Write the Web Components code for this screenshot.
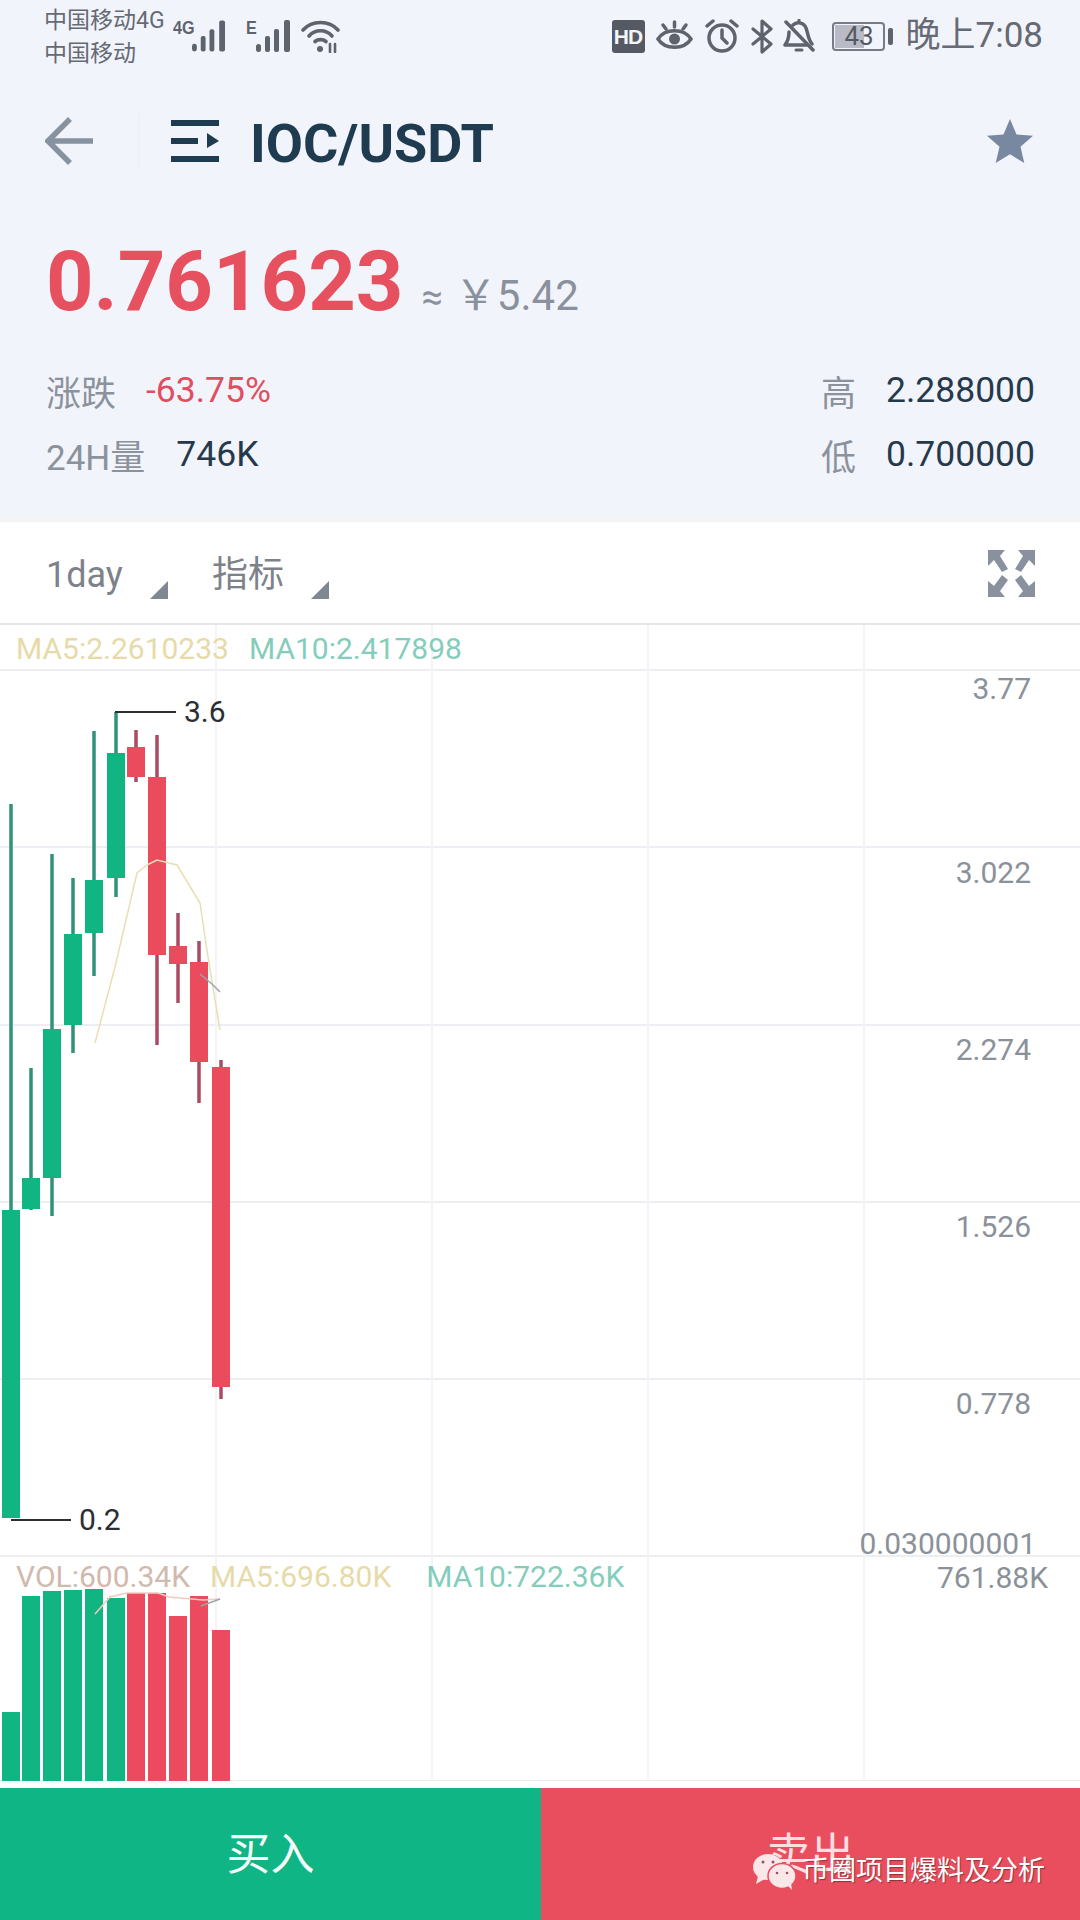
<!DOCTYPE html>
<html lang="zh">
<head>
<meta charset="utf-8">
<title>IOC/USDT</title>
<style>
html, body { margin: 0; padding: 0; background: #fff; }
body { width: 1080px; height: 1920px; overflow: hidden; font-family: Roboto, "Noto Sans CJK SC", sans-serif; }
#app { display: flex; flex-direction: column; width: 1080px; height: 1920px; position: relative; }
</style>
</head>
<body>
<div id="app">
    <status-bar></status-bar>
    <pair-header pair="IOC/USDT"></pair-header>
    <price-panel></price-panel>
    <chart-toolbar></chart-toolbar>
    <kline-chart></kline-chart>
    <trade-buttons></trade-buttons>
</div>

<script>
const FONT = 'Roboto, "Noto Sans CJK SC", sans-serif';

class StatusBar extends HTMLElement {
    constructor() {
        super();
        this.attachShadow({mode: "open"});
    }

    connectedCallback() {
        this.shadowRoot.innerHTML = `${this.styles()}${this.render()}`;
    }

    bars() {
        return `<svg width="35" height="34" viewBox="0 0 35 34">
            <g fill="#5f636e">
                <rect x="0" y="25" width="5" height="8" rx="2.5"/>
                <rect x="9" y="17" width="5" height="16" rx="2"/>
                <rect x="18" y="10" width="5" height="23" rx="2"/>
                <rect x="28" y="1" width="6" height="32" rx="2"/>
            </g></svg>`;
    }

    render() {
        return `
        <div class="carrier"><span>中国移动4G</span><span>中国移动</span></div>
        <div class="sig first"><b>4G</b>${this.bars()}</div>
        <div class="sig second"><b>E</b>${this.bars()}</div>
        <svg class="wifi" width="39" height="34" viewBox="0 0 39 34" fill="none" stroke="#5f636e" stroke-width="3.6" stroke-linecap="round">
            <path d="M2 11C11 1 28 1 37 11"/>
            <path d="M8 17C14 10 25 10 31 17"/>
            <path d="M14 22.500C17 20 22 20 25 22.500"/>
            <circle cx="19" cy="30" r="3" fill="#5f636e" stroke="none"/>
            <path d="M29 25V33M34 33V25" stroke-width="2.600"/>
        </svg>
        <div class="right">
            <div class="hd">HD</div>
            <svg class="eye" width="37" height="32" viewBox="0 0 37 32" fill="none" stroke="#5f636e" stroke-width="3.500" stroke-linecap="round">
                <path d="M2 19C9 8 28 8 35 19C28 30 9 30 2 19Z"/>
                <circle cx="18.500" cy="19" r="5.500" fill="#5f636e" stroke="none"/>
                <path d="M18.500 2V7M7 5L10 9M30 5L27 9"/>
            </svg>
            <svg width="34" height="34" viewBox="0 0 34 34" fill="none" stroke="#5f636e" stroke-width="3.500" stroke-linecap="round">
                <circle cx="17" cy="19" r="13"/>
                <path d="M17 11V19L22 24M2 7L8 2M32 7L26 2"/>
            </svg>
            <svg width="23" height="35" viewBox="0 0 23 35" fill="none" stroke="#5f636e" stroke-width="3.200" stroke-linecap="round" stroke-linejoin="round">
                <path d="M2 10L20 25L11 33V2L20 10L2 25"/>
            </svg>
            <svg class="bell" width="32" height="34" viewBox="0 0 32 34" fill="none" stroke="#5f636e" stroke-width="3.500" stroke-linecap="round" stroke-linejoin="round">
                <path d="M10 6C13 3 19 3 22 7C25 11 24 19 29 25M6 13C6 19 5 22 2 26H24"/>
                <path d="M3 3L30 31"/>
                <path d="M13 31H19" stroke-width="3"/>
                <path d="M16 1V3" stroke-width="3"/>
            </svg>
            <div class="battery"><i></i><span>43</span></div>
            <div class="tip"></div>
            <div class="time">晚上7:08</div>
        </div>
        `;
    }

    styles() {
        return `<style>
        :host { display: flex; align-items: flex-start; height: 72px; box-sizing: border-box; padding: 8px 37px 0 44px; background: #f2f4fb; color: #666a74; font-family: ${FONT}; }
        .carrier { display: flex; flex-direction: column; width: 129px; font-size: 23px; line-height: 33px; white-space: nowrap; margin-top: -4px; }
        .sig { display: flex; align-items: flex-start; margin-top: 11px; height: 34px; }
        .sig b { font: 700 19px/18px "Liberation Sans", sans-serif; color: #5f636e; transform: scaleX(.85); transform-origin: left; }
        .first { width: 53px; }
        .first b { width: 19px; }
        .second { margin-left: 20px; }
        .second b { width: 10px; }
        .wifi { margin: 11px 0 0 10px; }
        .right { display: flex; align-items: center; gap: 12px; margin-left: auto; margin-top: 11px; height: 34px; }
        .eye { margin-left: -1px; }
        .bell { margin-left: -3px; }
        .hd { width: 33px; height: 33px; border-radius: 3px; background: #555964; color: #f3f4f8; font: 700 21px/33px "Liberation Sans", sans-serif; text-align: center; letter-spacing: -1px; }
        .battery { position: relative; width: 53px; height: 29px; box-sizing: border-box; border: 2px solid #777b85; border-radius: 4px; margin-left: 5px; font-size: 26px; line-height: 25px; text-align: center; color: #565a65; }
        .battery i { position: absolute; left: 1px; top: 1px; bottom: 1px; width: 29px; background: #b8bbc6; }
        .battery span { position: relative; left: 1px; }
        .tip { width: 5px; height: 17px; border-radius: 2px; background: #5f636e; margin-left: -9px; }
        .time { font-size: 35px; line-height: 34px; margin-left: 1px; white-space: nowrap; }
        </style>`;
    }
}

class PairHeader extends HTMLElement {
    constructor() {
        super();
        this.attachShadow({mode: "open"});
    }

    connectedCallback() {
        this.shadowRoot.innerHTML = `${this.styles()}${this.render()}`;
    }

    render() {
        return `
        <svg class="back" width="48" height="48" viewBox="0 0 48 48" fill="none" stroke="#8792a0" stroke-width="5.500">
            <path d="M48 24H4M25 2L3 24L25 46"/>
        </svg>
        <div class="split"></div>
        <svg class="menu" width="48" height="42" viewBox="0 0 48 42" fill="#1f3b50">
            <rect x="0" y="0" width="48" height="6"/>
            <rect x="0" y="18" width="27" height="6"/>
            <rect x="0" y="36" width="48" height="6"/>
            <path d="M36 13L48 21L36 28Z"/>
        </svg>
        <div class="pair">${this.getAttribute('pair')}</div>
        <svg class="star" width="46" height="44" viewBox="0 0 46 44" fill="#7888a0">
            <path d="M23 0L29.500 15.500L46 16.800L33.500 27.800L37.300 44L23 35.300L8.700 44L12.500 27.800L0 16.800L16.500 15.500Z"/>
        </svg>
        `;
    }

    styles() {
        return `<style>
        :host { display: flex; align-items: center; height: 138px; box-sizing: border-box; padding: 0 47px 0 45px; background: #f2f4fb; font-family: ${FONT}; }
        .split { width: 2px; height: 54px; margin-left: 45px; background: #eff1f8; }
        .menu { margin-left: 31px; }
        .pair { margin: 4px 0 0 31px; font-size: 54px; font-weight: 700; color: #1f3b50; white-space: nowrap; }
        .star { margin-left: auto; }
        </style>`;
    }
}

class PricePanel extends HTMLElement {
    constructor() {
        super();
        this.attachShadow({mode: "open"});
    }

    connectedCallback() {
        this.shadowRoot.innerHTML = `${this.styles()}${this.render()}`;
    }

    render() {
        return `
        <div class="price"><b>0.761623</b><span class="approx">≈</span><span class="cny">￥5.42</span></div>
        <div class="stats">
            <div class="cell"><span class="k">涨跌</span><span class="v red">-63.75%</span></div>
            <div class="cell right"><span class="k">高</span><span class="v">2.288000</span></div>
            <div class="cell"><span class="k">24H量</span><span class="v">746K</span></div>
            <div class="cell right"><span class="k">低</span><span class="v">0.700000</span></div>
        </div>
        `;
    }

    styles() {
        return `<style>
        :host { display: flex; flex-direction: column; height: 312px; box-sizing: border-box; padding: 30px 45px 0 46px; background: #f2f4fb; border-bottom: 8px solid #f4f4f7; font-family: ${FONT}; }
        .price { display: flex; align-items: baseline; height: 84px; line-height: 84px; white-space: nowrap; }
        .price b { font-size: 83px; font-weight: 700; color: #e7505f; }
        .approx { margin-left: 18px; font-size: 38px; color: #8a919c; }
        .cny { margin-left: 12px; font-size: 42px; color: #8a919c; }
        .stats { display: grid; grid-template-columns: 1fr auto; grid-auto-rows: 64px; margin-top: 34px; }
        .cell { display: flex; align-items: center; white-space: nowrap; }
        .right { gap: 30px; }
        .k { font-size: 35px; color: #8b929c; }
        .v { margin-left: 31px; font-size: 35.500px; color: #26394b; }
        .right .v { margin-left: 0; }
        .red { margin-left: 30px; font-size: 35.500px; color: #df4f60; }
        </style>`;
    }
}

class ChartToolbar extends HTMLElement {
    constructor() {
        super();
        this.attachShadow({mode: "open"});
    }

    connectedCallback() {
        this.shadowRoot.innerHTML = `${this.styles()}${this.render()}`;
    }

    render() {
        return `
        <div class="drop"><span>1day</span><i></i></div>
        <div class="drop second"><span>指标</span><i></i></div>
        <svg class="full" width="47" height="47" viewBox="0 0 47 47" fill="#8a919e">
            <path d="M0 0H17L12 6L20 19L14 22L6 10L0 16Z"/>
            <path d="M47 0H30L35 6L27 19L33 22L41 10L47 16Z"/>
            <path d="M0 47H17L12 41L20 30L14 25L6 36L0 31Z"/>
            <path d="M47 47H30L35 41L27 30L33 25L41 36L47 31Z"/>
        </svg>
        `;
    }

    styles() {
        return `<style>
        :host { display: flex; align-items: center; height: 103px; box-sizing: border-box; padding: 0 45px 0 46px; background: #fff; border-bottom: 2px solid #e4e6ea; font-family: ${FONT}; color: #7d828a; }
        .drop { display: flex; align-items: flex-start; font-size: 36px; line-height: 40px; height: 40px; margin-top: 4px; }
        .drop i { width: 0; height: 0; margin: 26px 0 0 27px; border-style: solid; border-width: 0 0 18px 18px; border-color: transparent transparent #7e8792 transparent; }
        .second { margin-left: 44px; }
        .full { margin-left: auto; margin-top: 2px; }
        </style>`;
    }
}

class KlineChart extends HTMLElement {
    constructor() {
        super();
        this.attachShadow({mode: "open"});
    }

    connectedCallback() {
        this.shadowRoot.innerHTML = `${this.styles()}${this.render()}`;
    }

    // [center, wick top, wick bottom, body top, body bottom, vol top], page coordinates
    candles() {
        return [
            [11, 804, 1210, 1210, 1518, 1712, 'g'],
            [31, 1068, 1210, 1178, 1209, 1596, 'g'],
            [52, 854, 1216, 1029, 1178, 1591, 'g'],
            [73, 878, 1053, 934, 1025, 1590, 'g'],
            [94, 731, 976, 880, 933, 1589, 'g'],
            [116, 712, 897, 753, 878, 1598, 'g'],
            [136, 730, 782, 747, 777, 1593, 'r'],
            [157, 735, 1045, 777, 955, 1593, 'r'],
            [178, 913, 1003, 946, 964, 1616, 'r'],
            [199, 941, 1103, 962, 1062, 1596, 'r'],
            [221, 1060, 1399, 1067, 1387, 1630, 'r']
        ];
    }

    chartSvg() {
        const top = 625;
        const y = v => v - top;
        const lines = [670, 847, 1025, 1202, 1379, 1556, 1781].map(v =>
            `<rect x="0" y="${y(v) - 1}" width="1080" height="2" fill="#eceef2"/>`).join('');
        const cols = [216, 432, 648, 864].map(v =>
            `<rect x="${v - 1}" y="0" width="2" height="1156" fill="#f3f4f8"/>`).join('');
        const sticks = this.candles().map(c => {
            const body = c[6] === 'g' ? '#10b582' : '#ea4c5e';
            const wick = c[6] === 'g' ? '#2f9279' : '#a94c63';
            const vol = c[6] === 'g' ? '#10b582' : '#ec4a5e';
            return `<rect x="${c[0] - 1.750}" y="${y(c[1])}" width="3.500" height="${c[2] - c[1]}" fill="${wick}"/>
                <rect x="${c[0] - 9}" y="${y(c[3])}" width="18" height="${c[4] - c[3]}" fill="${body}"/>
                <rect x="${c[0] - 9}" y="${y(c[5])}" width="18" height="${1781 - c[5]}" fill="${vol}"/>`;
        }).join('');
        const pts = a => a.map(p => `${p[0]},${y(p[1])}`).join(' ');
        return `<svg class="canvas" width="1080" height="1156" viewBox="0 0 1080 1156">
            ${lines}${cols}${sticks}
            <polyline fill="none" stroke="#e9dfb4" stroke-width="1.500" points="${pts([[95,1043],[115,967],[137,873],[147,865],[157,860],[177,865],[200,903],[208,957],[220,1030]])}"/>
            <polyline fill="none" stroke="#9aa7a8" stroke-width="1.500" points="${pts([[200,974],[212,984],[220,992]])}"/>
            <rect x="115" y="${y(711)}" width="61" height="2" fill="#2b2f33"/>
            <rect x="11" y="${y(1519)}" width="60" height="2" fill="#2b2f33"/>
            <polyline fill="none" stroke="#f3c9c0" stroke-width="1.500" points="${pts([[95,1614],[110,1597],[127,1593],[158,1593],[169,1597],[203,1600],[220,1599]])}"/>
            <polyline fill="none" stroke="#9aa7a8" stroke-width="1.500" points="${pts([[201,1606],[220,1599]])}"/>
        </svg>`;
    }

    render() {
        const axis = [[3.77, 689], [3.022, 873], [2.274, 1050], [1.526, 1227], [0.778, 1404]];
        return `
        ${this.chartSvg()}
        <div class="legend main"><span class="ma5">MA5:2.2610233</span><span class="ma10">MA10:2.417898</span></div>
        ${axis.map(a => `<span class="tick" style="top:${a[1] - 625 - 20}px">${a[0]}</span>`).join('')}
        <span class="tick wide" style="top:${1544 - 625 - 20}px">0.030000001</span>
        <span class="tick vol" style="top:${1578 - 625 - 20}px">761.88K</span>
        <span class="mark" style="left:184px;top:${712 - 625 - 20}px">3.6</span>
        <span class="mark" style="left:79px;top:${1520 - 625 - 20}px">0.2</span>
        <div class="legend vols"><span class="volv">VOL:600.34K</span><span class="ma5">MA5:696.80K</span><span class="ma10">MA10:722.36K</span></div>
        `;
    }

    styles() {
        return `<style>
        :host { display: block; position: relative; height: 1156px; background: #fff; font-family: ${FONT}; font-size: 30px; line-height: 40px; white-space: nowrap; }
        .canvas { position: absolute; left: 0; top: 0; display: block; }
        .legend { position: absolute; left: 16px; display: flex; }
        .main { top: 4px; gap: 20px; }
        .vols { top: 932px; gap: 20px; }
        .vols .ma10 { margin-left: 15px; }
        .ma5 { color: #e6dba8; }
        .ma10 { color: #84cdbb; }
        .volv { color: #d2b9ad; }
        .tick { position: absolute; right: 49px; color: #8b9199; }
        .tick.wide { right: 44px; }
        .tick.vol { right: 32px; }
        .mark { position: absolute; color: #2b2f33; }
        </style>`;
    }
}

class TradeButtons extends HTMLElement {
    constructor() {
        super();
        this.attachShadow({mode: "open"});
    }

    connectedCallback() {
        this.shadowRoot.innerHTML = `${this.styles()}${this.render()}`;
    }

    render() {
        return `
        <div class="btn buy">买入</div>
        <div class="btn sell">卖出</div>
        <div class="mark">
            <svg width="44" height="37" viewBox="0 0 44 37">
                <g fill="#fbe6e8">
                    <ellipse cx="16" cy="14" rx="15" ry="13"/>
                    <path d="M6 23L4 31L13 26Z"/>
                </g>
                <ellipse cx="30" cy="23" rx="14" ry="12.500" fill="#fbe6e8" stroke="#e94e5f" stroke-width="1.500"/>
                <path d="M36 33L40 37L39 30Z" fill="#fbe6e8"/>
                <g fill="#8d5660">
                    <circle cx="11" cy="9" r="1.500"/><circle cx="21" cy="9" r="1.500"/>
                    <circle cx="25" cy="20" r="1.300"/><circle cx="35" cy="20" r="1.300"/>
                </g>
            </svg>
            <span>币圈项目爆料及分析</span>
        </div>
        `;
    }

    styles() {
        return `<style>
        :host { display: grid; grid-template-columns: 541px 1fr; position: relative; height: 139px; box-sizing: border-box; padding-top: 7px; background: #fff; font-family: ${FONT}; }
        .btn { display: flex; justify-content: center; padding-top: 42px; box-sizing: border-box; height: 132px; font-size: 44px; line-height: 50px; color: #f6fbf9; }
        .buy { background: #10b585; }
        .sell { background: #e94e5f; color: #fbdfe1; }
        .mark { position: absolute; left: 752px; top: 71px; display: flex; align-items: center; gap: 6px; color: #fff; font-size: 27px; line-height: 37px; white-space: nowrap; text-shadow: 1px 1px 1px rgba(60,30,30,.55); }
        .mark span { margin-top: 1px; }
        </style>`;
    }
}

customElements.define('status-bar', StatusBar);
customElements.define('pair-header', PairHeader);
customElements.define('price-panel', PricePanel);
customElements.define('chart-toolbar', ChartToolbar);
customElements.define('kline-chart', KlineChart);
customElements.define('trade-buttons', TradeButtons);
</script>
</body>
</html>
